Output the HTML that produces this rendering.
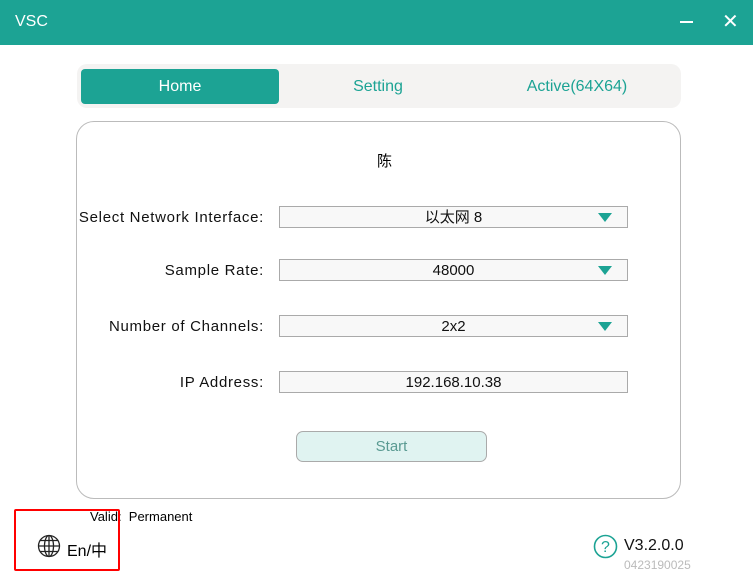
<!DOCTYPE html>
<html><head><meta charset="utf-8"><style>
body{margin:0;width:753px;height:574px;background:#fff;font-family:"Liberation Sans","Noto Sans CJK SC",sans-serif;position:relative;overflow:hidden}
.abs{position:absolute}
.title{left:0;top:0;width:753px;height:45px;background:#1ca394}
.tabs{left:77px;top:64px;width:604px;height:44px;background:#f4f3f2;border-radius:10px}
.home{left:81px;top:69px;width:198px;height:35px;background:#1ca394;border-radius:4px;color:#fff;font-size:16px;text-align:center;line-height:35px}
.tab{color:#1ca394;font-size:16px;top:69px;line-height:35px;text-align:center}
.card{left:76px;top:121px;width:605px;height:378px;border:1px solid #bbb;border-radius:18px;box-sizing:border-box}
.lbl{right:489px;font-size:15px;color:#111;text-align:right;white-space:nowrap;letter-spacing:0.7px}
.box{left:279px;width:349px;height:22px;border:1px solid #aaa;background:#f8f8f8;box-sizing:border-box;text-align:center;font-size:15px;line-height:21px;color:#111}
.tri{position:absolute;right:15px;top:6px;width:0;height:0;border-left:7.5px solid transparent;border-right:7.5px solid transparent;border-top:9px solid #1ca394}
</style></head><body>
<div class="abs title"></div>
<div class="abs" style="left:15px;top:13px;color:#fff;font-size:16px">VSC</div>
<div class="abs" style="left:680px;top:21px;width:13px;height:2px;background:#fff"></div>
<div class="abs" style="left:722px;top:9px;color:#fff;font-size:20px">✕</div>
<div class="abs tabs"></div>
<div class="abs home">Home</div>
<div class="abs tab" style="left:279px;width:198px">Setting</div>
<div class="abs tab" style="left:478px;width:198px">Active(64X64)</div>
<div class="abs card"></div>
<div class="abs" style="left:377px;top:150px;font-size:15px">陈</div>
<div class="abs lbl" style="top:209px">Select Network Interface:</div>
<div class="abs lbl" style="top:262px">Sample Rate:</div>
<div class="abs lbl" style="top:318px">Number of Channels:</div>
<div class="abs lbl" style="top:374px">IP Address:</div>
<div class="abs box" style="top:206px">以太网 8<span class="tri"></span></div>
<div class="abs box" style="top:259px">48000<span class="tri"></span></div>
<div class="abs box" style="top:315px">2x2<span class="tri"></span></div>
<div class="abs box" style="top:371px">192.168.10.38</div>
<div class="abs" style="left:296px;top:431px;width:191px;height:31px;box-sizing:border-box;border:1px solid #aaa;border-radius:7px;background:#e0f3f1;color:#5a9a92;font-size:15px;text-align:center;line-height:29px">Start</div>
<div class="abs" style="left:90px;top:509px;font-size:13px">Valid:&nbsp; Permanent</div>
<div class="abs" style="left:14px;top:509px;width:106px;height:62px;border:2px solid #f00;border-radius:2px;box-sizing:border-box"></div>
<svg class="abs" style="left:37px;top:534px" width="24" height="24" viewBox="0 0 24 24" fill="none" stroke="#222" stroke-width="1.3"><circle cx="12" cy="12" r="10.5"/><ellipse cx="12" cy="12" rx="4.5" ry="10.5"/><line x1="12" y1="1.5" x2="12" y2="22.5"/><line x1="1.5" y1="12" x2="22.5" y2="12"/><path d="M3.5 6.5h17M3.5 17.5h17"/></svg>
<div class="abs" style="left:67px;top:537px;font-size:16px">En/中</div>
<svg class="abs" style="left:593px;top:534px" width="25" height="25" viewBox="0 0 25 25"><circle cx="12.5" cy="12.5" r="11" fill="none" stroke="#1ca394" stroke-width="1.6"/><text x="12.5" y="18" font-size="16" text-anchor="middle" fill="#1ca394" font-family="Liberation Sans">?</text></svg>
<div class="abs" style="left:624px;top:537px;font-size:16px;color:#111">V3.2.0.0</div>
<div class="abs" style="left:624px;top:558px;font-size:12px;color:#bbb">0423190025</div>
</body></html>
